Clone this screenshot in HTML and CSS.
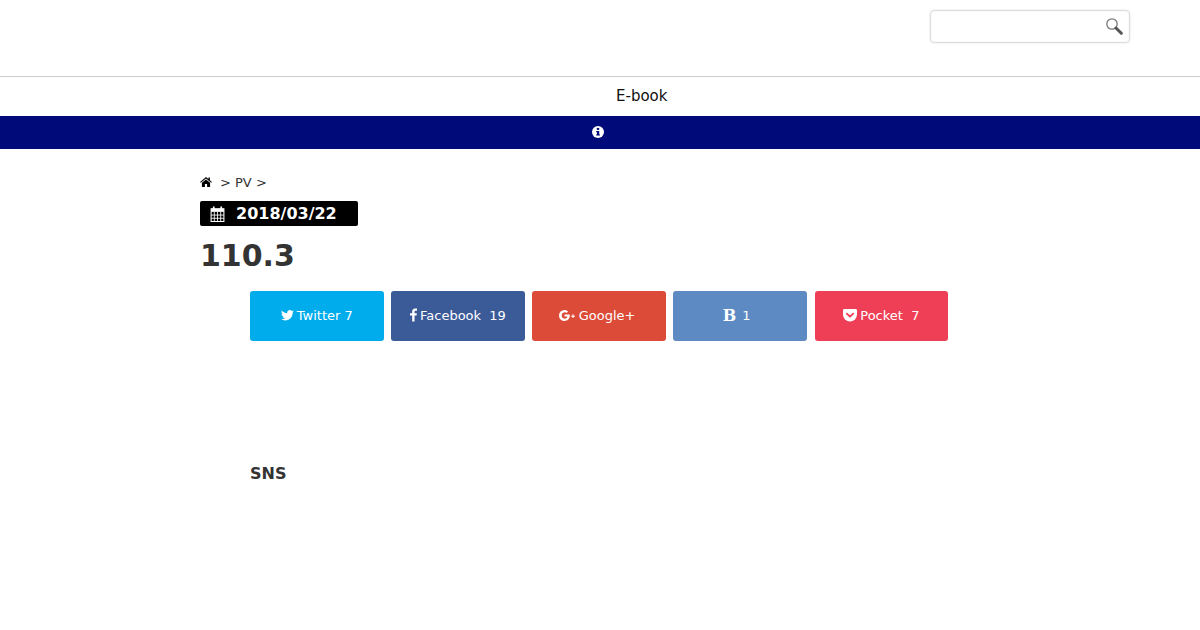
FILE: index.html
```html
<!DOCTYPE html>
<html lang="ja">
<head>
<meta charset="utf-8">
<title>110.3</title>
<link rel="stylesheet" href="styles.css">
</head>
<body>
<header class="top">
  <form class="search">
    <svg class="search-icon" viewBox="0 0 18 18" width="18" height="18"><circle cx="7" cy="7" r="5.2" fill="#fff" stroke="#777" stroke-width="1.3"/><path d="M11 11l5.3 5.3" stroke="#555" stroke-width="3" stroke-linecap="round"/></svg>
  </form>
</header>
<nav class="nav"><a class="nav-link">E-book</a></nav>
<div class="info">
  <svg viewBox="0 0 12 12" width="12" height="12"><circle cx="6" cy="6" r="6" fill="#fff"/><rect x="4.8" y="1.9" width="2.4" height="2" fill="#000a78"/><path d="M4.3 5h2.9v3.4h.8v1.2H4.1V8.4h.9V6.2h-.7z" fill="#000a78"/></svg>
</div>
<main class="main">
  <div class="crumbs">
    <svg class="home" viewBox="0 0 13 11" width="12" height="10"><path d="M6.5 0L0 5.6l.7.8L6.500 1.600l5.800 4.800.7-.8L10.800 3.700V.6H9.200v1.700z" fill="#000"/><path d="M6.500 2.700L2 6.400V11h3.300V7.700h2.400V11H11V6.400z" fill="#000"/></svg>
    <span class="crumb-text">&gt; PV &gt;</span>
  </div>
  <div class="date">
    <svg viewBox="1 0 13 15" width="15" height="16"><path d="M1.500 2.500h12v12h-12z" fill="none" stroke="#fff" stroke-width="1"/><path d="M1.500 2.500h12v3h-12z" fill="#fff"/><path d="M4 .5v3M11 .5v3" stroke="#fff" stroke-width="1.600"/><path d="M4.500 5.500v9M7.500 5.500v9M10.500 5.500v9M1.500 8.500h12M1.500 11.500h12" stroke="#fff" stroke-width=".8"/></svg>
    <span>2018/03/22</span>
  </div>
  <h1 class="title">110.3</h1>
  <div class="article">
    <div class="shares">
      <a class="share twitter"><svg class="ic" viewBox="0 0 14 12" width="13" height="11"><path d="M14 1.400c-.5.200-1.100.400-1.700.500.600-.4 1-.9 1.300-1.600-.6.300-1.200.6-1.800.7C11.200.4 10.500 0 9.600 0 8 0 6.700 1.300 6.700 2.900c0 .2 0 .4.100.7C4.400 3.500 2.300 2.300.9.500.7.900.5 1.400.5 2c0 1 .5 1.900 1.300 2.400-.5 0-.9-.1-1.300-.4 0 1.400 1 2.600 2.300 2.900-.4.100-.9.100-1.300 0 .4 1.200 1.400 2 2.700 2-1 .8-2.200 1.200-3.600 1.200H0c1.300.8 2.800 1.300 4.400 1.300 5.300 0 8.200-4.400 8.200-8.200v-.4c.6-.4 1-.9 1.400-1.400z" fill="#fff"/></svg>Twitter 7</a>
      <a class="share facebook"><svg class="ic" viewBox="0 0 8 15" width="7" height="14"><path d="M5.200 15V8.200h2.300l.3-2.700H5.200V3.800c0-.8.200-1.300 1.300-1.300H8V.1C7.700.1 6.900 0 5.900 0 3.900 0 2.500 1.200 2.500 3.500v2H0v2.700h2.500V15z" fill="#fff"/></svg>Facebook&nbsp; 19</a>
      <a class="share google"><svg class="ic" viewBox="0 0 17 11" width="17" height="11"><path d="M5.500 4.600v2h3c-.2 1-1.200 2.100-3 2.100a3.300 3.300 0 010-6.500c1 0 1.600.4 2 .8l1.600-1.500C8.100.6 6.900 0 5.500 0a5.500 5.500 0 100 11c3.200 0 5.300-2.200 5.300-5.400 0-.4 0-.7-.1-1z" fill="#fff"/><path d="M13.500 4.300v1.400h-1.400v1h1.400v1.400h1V6.700H16v-1h-1.500V4.300z" fill="#fff"/></svg>Google+</a>
      <a class="share hatena"><b class="hb">B</b><span class="hn">1</span></a>
      <a class="share pocket"><svg class="ic" viewBox="0 0 14 13" width="14" height="13"><path d="M1.300 0h11.400C13.400 0 14 .6 14 1.300V5.500A7 7 0 010 5.500V1.300C0 .6.600 0 1.300 0z" fill="#fff"/><path d="M3.800 4.600L7 7.700l3.200-3.100" fill="none" stroke="#ef3f56" stroke-width="1.800" stroke-linecap="round" stroke-linejoin="round"/></svg>Pocket&nbsp; 7</a>
    </div>
    <h2 class="sns">SNS</h2>
  </div>
</main>
</body>
</html>
```
FILE: styles.css
```css
* { box-sizing: border-box; }
html, body { margin: 0; padding: 0; }
body {
  height: 630px;
  overflow: hidden;
  background: #fff;
  color: #333;
  font-family: "DejaVu Sans", sans-serif;
}
.top {
  height: 77px;
  border-bottom: 1px solid #ccc;
  padding: 10px 70px 0 0;
  display: flex;
  justify-content: flex-end;
  align-items: flex-start;
}
.search {
  width: 200px;
  height: 33px;
  margin: 0;
  border: 1px solid #ddd;
  border-radius: 4px;
  box-shadow: 0 0 2px #ddd, inset 0 0 2px #eee;
  display: flex;
  justify-content: flex-end;
  align-items: center;
  padding: 0 6px 2px 0;
}
.search-icon { display: block; }
.nav {
  height: 39px;
  display: flex;
  align-items: center;
  padding: 0 0 2px 616px;
}
.nav-link { font-size: 15px; color: #111; }
.info {
  height: 33px;
  background: #000a78;
  display: flex;
  align-items: center;
  padding: 0 0 1px 592px;
}
.info svg { display: block; }
.main { padding: 26px 0 0 200px; }
.crumbs {
  display: flex;
  align-items: center;
  height: 14px;
  font-size: 13px;
  color: #333;
}
.home { margin-right: 8px; }
.date {
  width: 158px;
  height: 25px;
  margin-top: 12px;
  background: #000;
  border-radius: 2px;
  color: #fff;
  font-size: 16px;
  font-weight: 700;
  display: flex;
  align-items: center;
  padding-left: 10px;
  gap: 11px;
}
.title {
  margin: 10px 0 0;
  font-size: 30px;
  line-height: 40px;
  font-weight: 700;
  color: #333;
}
.article { padding-left: 50px; }
.shares {
  display: flex;
  gap: 7.55px;
  margin-top: 15px;
  width: 698.2px;
}
.share {
  flex: 0 0 133.6px;
  height: 50px;
  border-radius: 3px;
  color: #fff;
  font-size: 13px;
  display: flex;
  align-items: center;
  justify-content: center;
  padding-bottom: 2px;
}
.ic { margin-right: 3px; display: block; }
.twitter { background: #00acec; }
.facebook { background: #3b5a98; }
.google { background: #dc4a38; padding-right: 4px; }
.hatena { background: #5d8ac3; padding-right: 7px; gap: 6px; }
.pocket { background: #ef3f56; }
.hb { font-family: "DejaVu Serif", serif; font-size: 16px; }
.sns {
  margin: 123px 0 0;
  font-size: 16px;
  line-height: 19px;
  font-weight: 700;
  color: #333;
}
```
